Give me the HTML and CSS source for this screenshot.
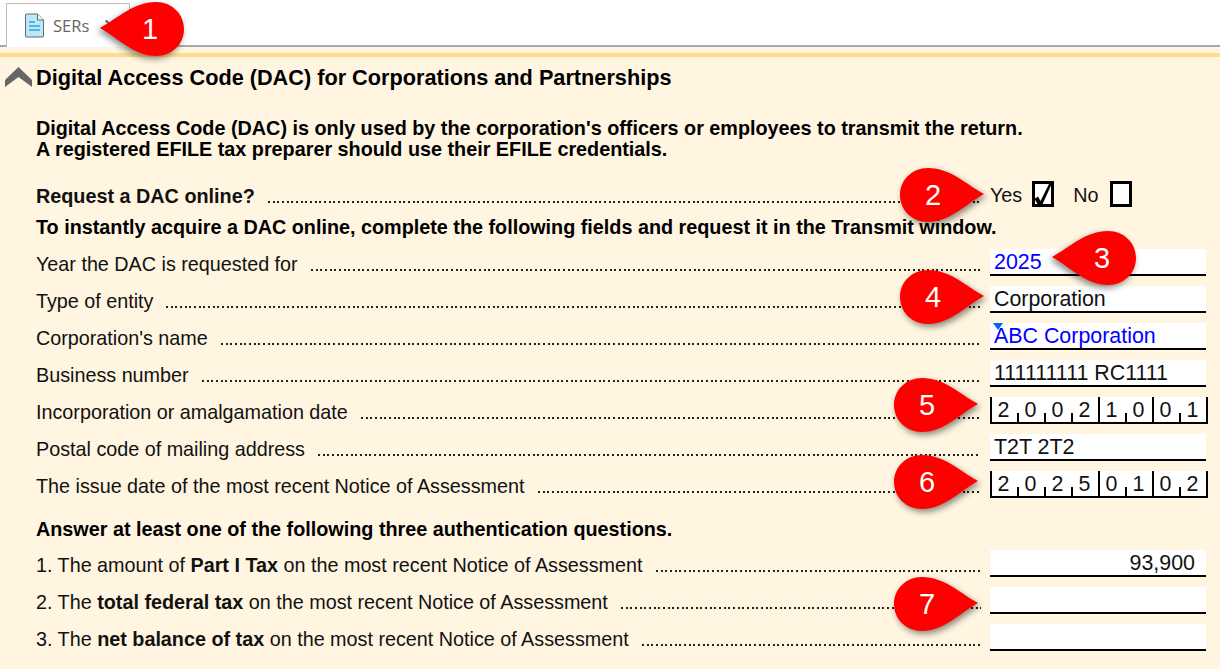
FILE: index.html
```html
<!DOCTYPE html>
<html lang="en">
<head>
<meta charset="utf-8">
<meta name="viewport" content="width=device-width,initial-scale=1">
<title>SERs - Digital Access Code</title>
<link rel="stylesheet" href="styles.css">
</head>
<body>

<!-- TAB BAR -->
<header class="tabbar">
  <div class="tab">
    <svg class="doc" width="20" height="25" viewBox="0 0 20 25">
      <path d="M1.5 1h11l6 6v16a1 1 0 0 1-1 1h-16a1 1 0 0 1-1-1V2a1 1 0 0 1 1-1z" fill="#bfe6f7" stroke="#5b6b78"/>
      <path d="M12.5 1v6h6" fill="#eef8fc" stroke="#5b6b78"/>
      <path d="M4 9h6M4 13h11M4 17h11" stroke="#2aa5e0" stroke-width="1.4"/>
    </svg>
    <span class="tab-name">SERs</span>
    <span class="tab-close">✕</span>
  </div>
</header>

<main class="form">
  <h1 class="title">
    <svg class="chevron" width="27" height="20" viewBox="0 0 27 20"><path d="M0 13 13.5 0 27 13v7L13.5 10 0 20z" fill="#666"/></svg>
    Digital Access Code (DAC) for Corporations and Partnerships
  </h1>

  <p class="intro">Digital Access Code (DAC) is only used by the corporation's officers or employees to transmit the return.<br>A registered EFILE tax preparer should use their EFILE credentials.</p>

  <div class="row row-ask">
    <span class="label"><b>Request a DAC online?</b></span>
    <span class="leader"></span>
    <div class="yesno">
      <span>Yes</span>
      <span class="box"><svg width="20" height="26" viewBox="0 0 20 26"><path d="M1.5 18 5 15.5 7.5 20 17.5 0H20L8.5 25.5H6z" fill="#000"/></svg></span>
      <span class="no">No</span>
      <span class="box box-no"></span>
    </div>
  </div>
  <p class="subhead">To instantly acquire a DAC online, complete the following fields and request it in the Transmit window.</p>

  <div class="row"><span class="label">Year the DAC is requested for</span><span class="leader"></span><div class="field blue">2025</div></div>
  <div class="row"><span class="label">Type of entity</span><span class="leader"></span><div class="field">Corporation</div></div>
  <div class="row"><span class="label">Corporation's name</span><span class="leader"></span><div class="field blue"><span class="marker"></span>ABC Corporation</div></div>
  <div class="row"><span class="label">Business number</span><span class="leader"></span><div class="field">111111111 RC1111</div></div>
  <div class="row"><span class="label">Incorporation or amalgamation date</span><span class="leader"></span>
    <div class="comb"><span class="major">2</span><span>0</span><span>0</span><span>2</span><span class="major">1</span><span>0</span><span class="major">0</span><span>1</span></div>
  </div>
  <div class="row"><span class="label">Postal code of mailing address</span><span class="leader"></span><div class="field">T2T 2T2</div></div>
  <div class="row"><span class="label">The issue date of the most recent Notice of Assessment</span><span class="leader"></span>
    <div class="comb"><span class="major">2</span><span>0</span><span>2</span><span>5</span><span class="major">0</span><span>1</span><span class="major">0</span><span>2</span></div>
  </div>

  <p class="subhead subhead-answer">Answer at least one of the following three authentication questions.</p>

  <div class="row"><span class="label">1. The amount of <b>Part I Tax</b> on the most recent Notice of Assessment</span><span class="leader"></span><div class="field amount">93,900</div></div>
  <div class="row"><span class="label">2. The <b>total federal tax</b> on the most recent Notice of Assessment</span><span class="leader"></span><div class="field"></div></div>
  <div class="row"><span class="label">3. The <b>net balance of tax</b> on the most recent Notice of Assessment</span><span class="leader"></span><div class="field"></div></div>
</main>

<!-- RED CALLOUTS -->
<div class="pin pin-left pin-1"><svg width="84" height="54" viewBox="0 0 84 54"><path d="M84 26C66 16 50 0 28 0 12 0 0 12 0 27s12 27 28 27c22 0 38-18 56-28z"/></svg><span>1</span></div>
<div class="pin pin-2"><svg width="84" height="54" viewBox="0 0 84 54"><path d="M84 26C66 16 50 0 28 0 12 0 0 12 0 27s12 27 28 27c22 0 38-18 56-28z"/></svg><span>2</span></div>
<div class="pin pin-left pin-3"><svg width="84" height="54" viewBox="0 0 84 54"><path d="M84 26C66 16 50 0 28 0 12 0 0 12 0 27s12 27 28 27c22 0 38-18 56-28z"/></svg><span>3</span></div>
<div class="pin pin-4"><svg width="84" height="54" viewBox="0 0 84 54"><path d="M84 26C66 16 50 0 28 0 12 0 0 12 0 27s12 27 28 27c22 0 38-18 56-28z"/></svg><span>4</span></div>
<div class="pin pin-5"><svg width="84" height="54" viewBox="0 0 84 54"><path d="M84 26C66 16 50 0 28 0 12 0 0 12 0 27s12 27 28 27c22 0 38-18 56-28z"/></svg><span>5</span></div>
<div class="pin pin-6"><svg width="84" height="54" viewBox="0 0 84 54"><path d="M84 26C66 16 50 0 28 0 12 0 0 12 0 27s12 27 28 27c22 0 38-18 56-28z"/></svg><span>6</span></div>
<div class="pin pin-7"><svg width="84" height="54" viewBox="0 0 84 54"><path d="M84 26C66 16 50 0 28 0 12 0 0 12 0 27s12 27 28 27c22 0 38-18 56-28z"/></svg><span>7</span></div>

</body>
</html>
```

FILE: styles.css
```css
:root{
  --cream:#fff5e0;
  --line:#000;
}
*{box-sizing:border-box;margin:0;padding:0}
html,body{height:100%;overflow:hidden}
body{font-family:"Liberation Sans",Arial,sans-serif;font-size:19.75px;background:var(--cream);color:#111;position:relative}
b{font-size:19.8px}

/* ---------- TAB BAR ---------- */
.tabbar{height:47px;background:#fff;border-bottom:2px solid #a9a9a9;padding:3px 0 0 6px}
.tab{
  width:124px;height:44px;background:#fff;border:1px solid #bdbdbd;border-bottom:none;
  display:flex;align-items:center;gap:8px;padding:0 0 0 18px;
}
.tab-name{font-family:"Open Sans",sans-serif;font-size:16.5px;color:#666}
.tab-close{font-size:17px;color:#555;margin-left:6px}

/* ---------- FORM ---------- */
.form{border-top:4px solid #ffdc8c;margin-top:6px;padding:0 14px 0 36px;position:relative}
.title{font-size:21.7px;font-weight:700;color:#000;line-height:24px;padding-top:9px;position:relative}
.chevron{position:absolute;left:-31px;top:10px}
.intro{font-weight:700;font-size:19.8px;line-height:21px;color:#000;margin-top:28px;white-space:nowrap}
.subhead{font-weight:700;font-size:19.8px;line-height:24px;color:#000;height:34px;white-space:nowrap}
.subhead-answer{margin-top:9px;height:33px}

.row{display:flex;align-items:flex-start;height:37px}
.row-ask{height:34px;margin-top:21px}
.label{line-height:30px;white-space:nowrap}
.leader{
  flex:1;height:2px;margin:20px 9px 0 13px;
  background:linear-gradient(90deg,#222 2px,transparent 2px 5px,#222 5px 7px,transparent 7px 9px,#222 9px 11px,transparent 11px) 0 0/14px 2px repeat-x;
}
.field{
  width:216px;height:27px;background:#fff;border-bottom:2px solid var(--line);
  padding:0 4px;line-height:26px;font-size:21.4px;white-space:nowrap;position:relative;
}
.blue{color:#00f}
.amount{text-align:right;padding-right:11px}
.marker{position:absolute;left:3px;top:0;border:5px solid transparent;border-top:7px solid #06f;border-bottom:none}

/* date comb */
.comb{
  width:218px;height:27px;margin-right:-2px;background:#fff;border-bottom:2px solid var(--line);border-right:2px solid var(--line);
  display:grid;grid-template-columns:repeat(8,1fr);font-size:21.4px;line-height:27px;text-align:center;
}
.comb span{position:relative}
.comb span:before{content:"";position:absolute;left:0;bottom:0;height:11px;border-left:2px solid var(--line)}
.comb .major:before{height:100%}

/* yes / no */
.yesno{width:216px;display:flex;align-items:flex-start;line-height:29px}
.box{width:22px;height:26px;margin-left:10px;border:3px solid #000;background:#fff;display:flex;justify-content:center;align-items:center}
.box svg{flex:none}
.no{margin-left:19px}
.box-no{margin-left:12px}

/* ---------- CALLOUTS ---------- */
.pin{position:absolute;width:84px;height:54px}
.pin svg{display:block;fill:#f00;filter:drop-shadow(2px 3px 3px rgba(0,0,0,.45))}
.pin span{position:absolute;left:0;top:0;width:66px;text-align:center;color:#fff;font-size:29px;line-height:54px}
.pin-left svg{transform:scaleX(-1)}
.pin-left span{left:17px}
.pin-1{left:100px;top:2px}
.pin-2{left:900px;top:168px}
.pin-3{left:1052px;top:231px}
.pin-4{left:900px;top:270px}
.pin-5{left:894px;top:378px}
.pin-6{left:894px;top:455px}
.pin-7{left:894px;top:577px}
```
